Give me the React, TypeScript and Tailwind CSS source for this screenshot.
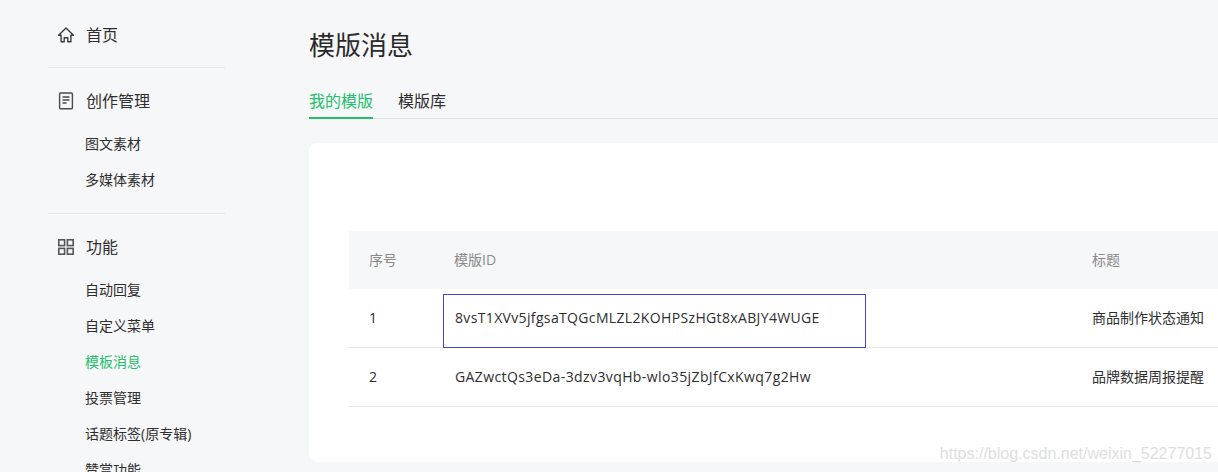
import React from 'react';

const FONT = "font-['Open_Sans','Noto_Sans_CJK_SC',sans-serif]";

function HomeIcon() {
  return (
    <svg width="16" height="16" viewBox="0 0 16 16" fill="none" stroke="#3a3a3a" strokeWidth="1.4">
      <path d="M0.6 8.2 8 1l7.4 7.2h-2.5v6.6H9.8v-4H6.2v4H3.1V8.2z" strokeLinejoin="round" />
    </svg>
  );
}

function DocIcon() {
  return (
    <svg width="16" height="18" viewBox="0 0 16 18" fill="none" stroke="#4a4a4a" strokeWidth="1.4">
      <rect x="1.6" y="1" width="12.8" height="15.8" rx="1" />
      <path d="M4.5 5h7M4.5 8h7M4.5 11h4" />
    </svg>
  );
}

function GridIcon() {
  return (
    <svg width="16" height="16" viewBox="0 0 16 16" fill="none" stroke="#555555" strokeWidth="1.6">
      <rect x="0.8" y="0.8" width="5.8" height="5.8" />
      <rect x="9.4" y="0.8" width="5.8" height="5.8" />
      <rect x="0.8" y="9.4" width="5.8" height="5.8" />
      <rect x="9.4" y="9.4" width="5.8" height="5.8" />
    </svg>
  );
}

function SubItem({ label, active }: { label: string; active?: boolean }) {
  return (
    <div className={`h-9 pl-[37px] flex items-center text-sm ${active ? 'text-[#22c06a]' : 'text-[#2e2e2e]'}`}>
      {label}
    </div>
  );
}

function GroupTitle({ icon, label }: { icon: React.ReactNode; label: string }) {
  return (
    <div className="h-6 flex items-center text-base text-[#2e2e2e]">
      <span className="w-[38px] pl-[10px] flex items-center">{icon}</span>
      {label}
    </div>
  );
}

export default function App() {
  return (
    <div className={`relative w-[1218px] h-[472px] overflow-hidden flex bg-[#f6f7f9] ${FONT}`}>
      {/* sidebar */}
      <aside className="w-[309px] shrink-0 pl-[48px] pr-[84px]">
        <div className="pt-[23px] pb-5 border-b border-[#e4e6ea]">
          <GroupTitle icon={<HomeIcon />} label="首页" />
        </div>
        <div className="pt-[21px] pb-[15px] border-b border-[#e4e6ea]">
          <GroupTitle icon={<DocIcon />} label="创作管理" />
          <div className="mt-[13px]">
            <SubItem label="图文素材" />
            <SubItem label="多媒体素材" />
          </div>
        </div>
        <div className="pt-[21px]">
          <GroupTitle icon={<GridIcon />} label="功能" />
          <div className="mt-[13px]">
            <SubItem label="自动回复" />
            <SubItem label="自定义菜单" />
            <SubItem label="模板消息" active />
            <SubItem label="投票管理" />
            <SubItem label="话题标签(原专辑)" />
            <SubItem label="赞赏功能" />
          </div>
        </div>
      </aside>

      {/* main */}
      <main className="flex-1 min-w-0">
        <h1 className="pt-[26px] h-[77px] text-[26px] leading-[38px] text-[#2a2a2a]">模版消息</h1>
        <div className="h-[42px] flex items-start gap-[25px] border-b border-[#e0e2e6] text-base">
          <div className="h-[42px] pt-[12px] leading-6 border-b-2 border-[#22c06a] text-[#22c06a]">我的模版</div>
          <div className="pt-[12px] leading-6 text-[#2e2e2e]">模版库</div>
        </div>

        <div className="mt-6 w-[1000px] h-[319px] bg-white rounded-lg pt-[88px] pl-10 text-sm">
          <div className="grid grid-cols-[86px_637px_1fr] h-[58px] items-center bg-[#f6f7f9] text-[#8a8a8a]">
            <div className="pl-5">序号</div>
            <div className="pl-5 -ml-px">模版ID</div>
            <div className="pl-5">标题</div>
          </div>
          <div className="grid grid-cols-[86px_637px_1fr] h-[59px] items-center border-b border-[#e4e6ea] text-[#2e2e2e]">
            <div className="pl-5">1</div>
            <div className="pl-5 tracking-[0.35px]">8vsT1XVv5jfgsaTQGcMLZL2KOHPSzHGt8xABJY4WUGE</div>
            <div className="pl-5">商品制作状态通知</div>
          </div>
          <div className="grid grid-cols-[86px_637px_1fr] h-[59px] items-center border-b border-[#e4e6ea] text-[#2e2e2e]">
            <div className="pl-5">2</div>
            <div className="pl-5 tracking-[0.4px]">GAZwctQs3eDa-3dzv3vqHb-wlo35jZbJfCxKwq7g2Hw</div>
            <div className="pl-5">品牌数据周报提醒</div>
          </div>
        </div>
      </main>

      {/* selection box drawn over the first id */}
      <div className="absolute left-[443px] top-[294px] w-[423px] h-[54px] border border-[#4046c8]" />
      {/* watermark */}
      <div className="absolute right-[6px] top-[444px] text-base leading-5 text-[#dedede] font-['Liberation_Sans',sans-serif]">
        https://blog.csdn.net/weixin_52277015
      </div>
    </div>
  );
}
